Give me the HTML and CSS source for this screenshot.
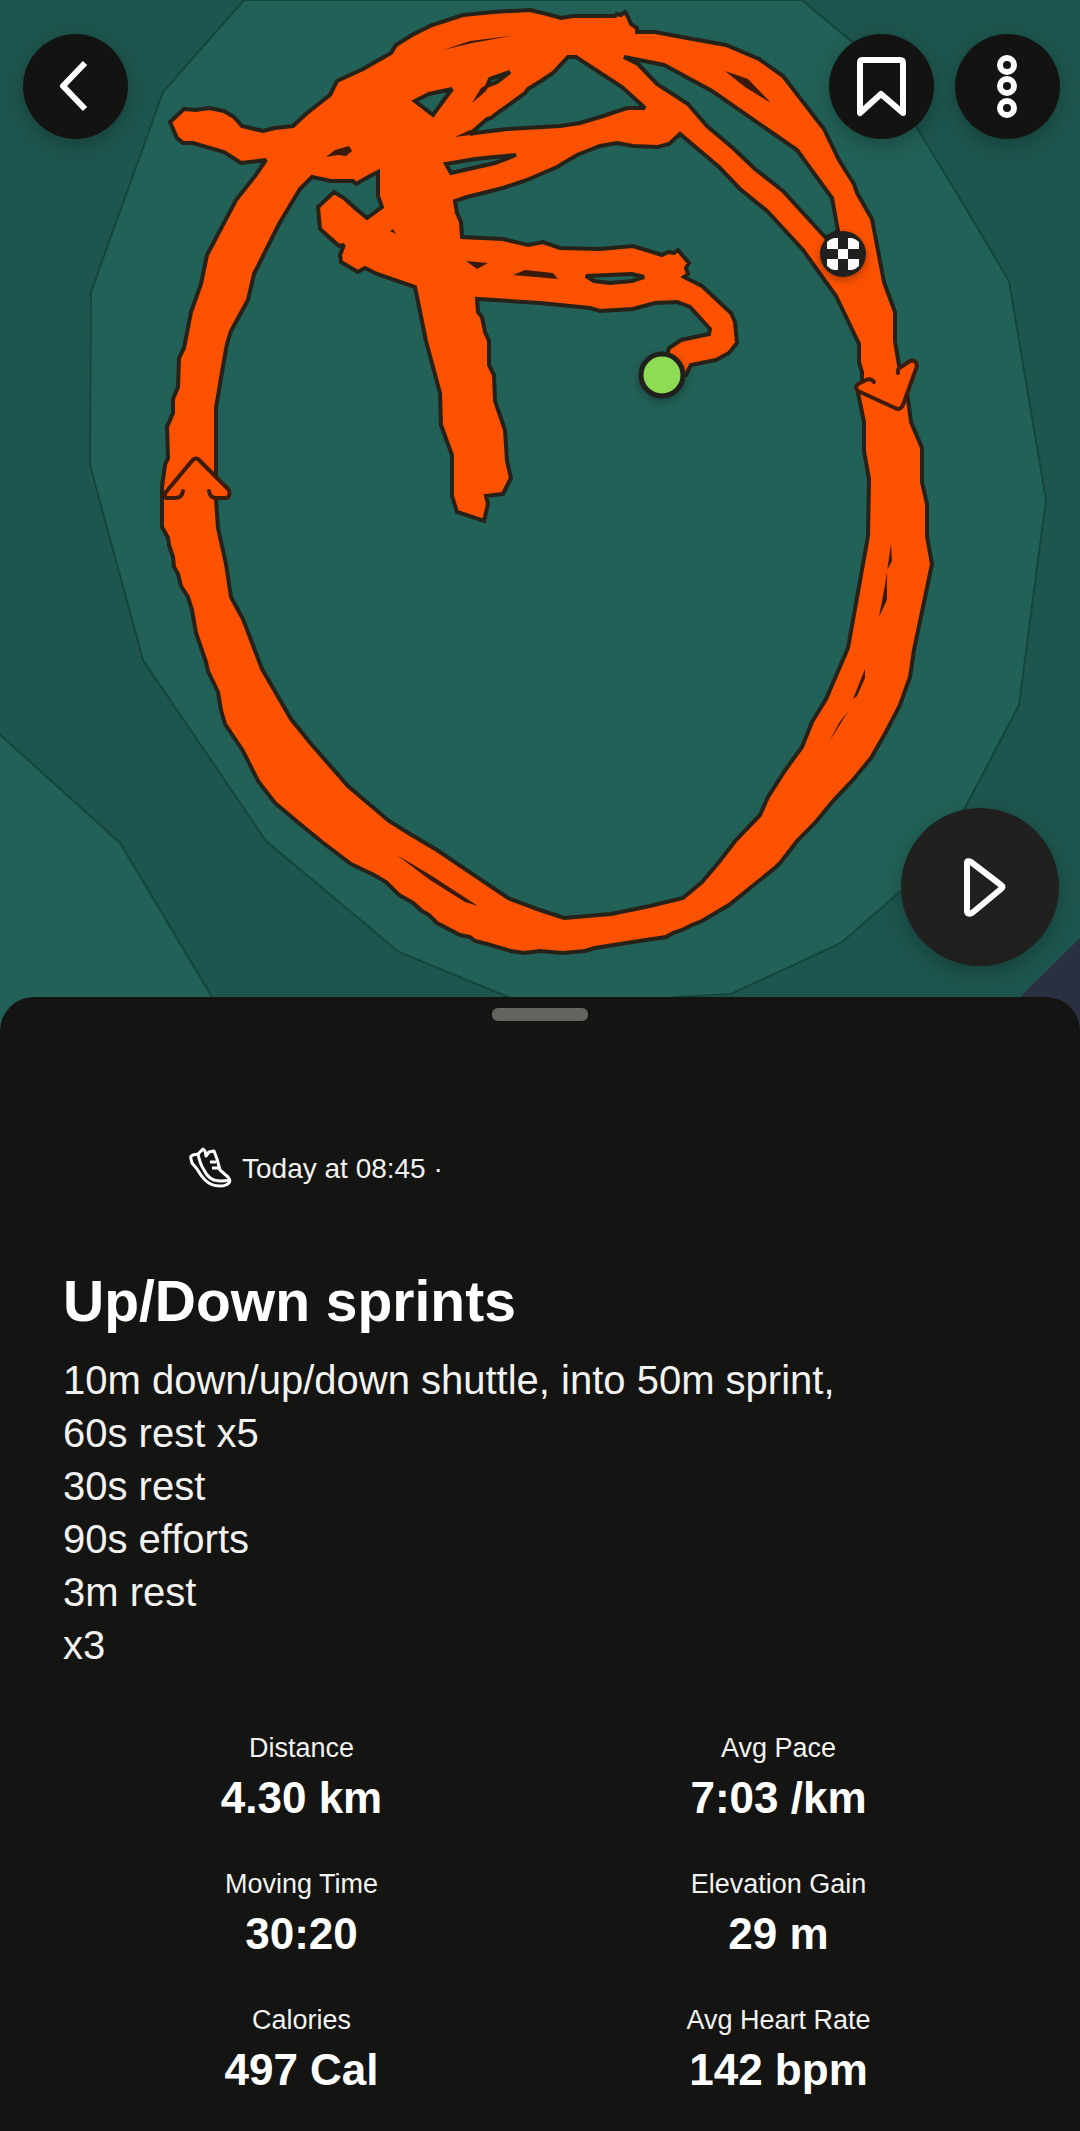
FILE: index.html
```
<!DOCTYPE html>
<html lang="en">
<head>
    <meta charset="UTF-8">
    <meta name="viewport" content="width=device-width, initial-scale=1.0">
    <title>Up/Down sprints</title>
    <link rel="stylesheet" href="styles.css">
</head>
<body>
    <section class="map">
        <svg class="map-canvas" viewBox="0 0 1080 1040" role="img" aria-label="Route map">
            <!-- Terrain -->
            <rect class="ground" width="1080" height="1040"/>
            <path class="field" d="M244 0 163 92 91 292 90 465 143 660 266 841 399 952 508 997 540 1010 679 997 731 994 841 943 901 891 965 808 1019 705 1046 500 1009 281 962 202 917 128 852 42 802 0Z"/>
            <path class="field" d="M-4 731 120 843 212 997 230 1044 -4 1044Z"/>
            <path class="road" d="M1080 938 1020 997 980 1040H1080Z"/>

            <!-- Route -->
            <path class="route" d="M170 122 184 109 196 110 209 108 224 111 234 117 242 126 263 131 275 128 293 126 307 113 330 95 337 81 363 69 391 53 396 45 412 35 432 25 463 15 493 12 530 10 547 14 561 18 573 16 615 16 617 14 621 15 625 12 628 17 631 24 637 28 637 32 655 32 687 38 726 45 759 59 783 76 824 129 839 160 854 184 857 193 872 219 884 282 895 312 895 341 899 365 908 399 911 422 922 448 922 482 927 504 927 536 932 564 914 650 910 677 900 705 886 732 871 758 853 780 833 801 815 823 797 841 781 862 776 867 729 905 702 921 692 925 682 930 673 933 666 937 626 943 595 948 585 951 563 953 540 951 524 953 511 951 487 944 475 941 470 937 460 935 437 923 429 915 422 911 413 903 399 895 386 882 374 875 351 864 322 842 300 824 275 803 258 781 243 751 225 724 221 710 218 692 208 671 206 662 196 633 192 610 188 597 181 586 178 574 174 567 173 557 169 545 168 538 162 527 162 487 165 465 168 458 167 427 173 413 173 399 178 387 179 358 184 348 191 312 201 284 207 255 236 200 255 176 266 160 241 163 224 152 193 143 183 143 177 138Z
                M312 177 331 181 353 181 356 184 370 176 378 172 378 196 382 207 367 218 355 208 344 198 334 192 318 207 320 229 339 246 344 245 340 255 341 262 358 272 365 268 377 274 415 287 426 341 440 393 441 425 452 455 452 496 457 512 484 521 488 504 486 496 503 494 511 478 507 461 505 430 495 401 494 375 489 365 489 341 485 332 482 317 478 312 477 299 540 303 590 308 600 311 633 309 655 303 677 302 690 307 710 329 709 334 681 340 669 348 661 375 686 375 691 365 716 360 729 353 737 343 735 322 731 313 702 286 684 277 688 274 686 268 689 263 683 256 678 250 674 253 668 252 662 255 633 246 600 249 560 248 543 242 528 245 503 239 462 237 461 222 457 213 455 201 467 197 503 188 527 180 557 167 577 155 600 146 617 143 633 146 658 147 669 144 680 134 719 167 740 189 767 211 803 250 836 296 859 344 859 362 862 372 862 382 858 393 864 422 864 451 869 479 868 536 848 648 826 699 812 722 802 747 786 769 768 797 760 815 736 840 719 862 702 882 683 898 650 906 611 914 564 918 540 910 508 898 437 850 410 834 389 821 348 786 312 745 291 719 262 669 243 619 231 597 226 564 218 528 216 499 216 408 222 372 227 344 231 331 248 300 254 274 279 224 300 189Z
                M624 57 664 65 712 91 797 150 832 198 838 231 826 238 783 191 755 169 733 148 707 126 688 104 657 84 638 64Z
                M470 134 487 119 491 118 500 111 506 107 525 93 528 89 541 81 553 73 568 57 576 57 622 87 645 108 627 108 600 117 580 123 560 126 507 129 475 133Z
                M415 101 429 94 452 89 433 115Z
                M446 164 475 159 516 155 495 163 451 173Z
                M490 79 510 72 497 82 487 86Z
                M586 276 632 274 644 277 632 281 610 283 594 281Z"/>
            <path class="gap" d="M443 50 470 41 517 35 472 43Z M472 103 481 88 491 82 486 91Z M455 137 470 130 478 134Z M326 157 335 150 349 146 352 151 346 156 338 155Z M390 231 393 229 396 234Z M466 261 488 263 477 269Z M513 275 525 270 553 273 558 279Z M725 71 748 79 771 103 745 87Z M891 544 892 561 887 570 887 600 879 617 885 585Z M865 669 865 678 857 696 853 699Z M849 710 829 742 839 723Z M397 855 432 876 478 906 465 902 430 880Z"/>

            <!-- Direction arrows -->
            <path class="arrow" d="M183 491Q182 498 175 498H166Q163 495 166 492L191 462Q196 455 201 462L229 490Q231 498 225 498H216Q210 498 209 491"/>
            <path class="arrow" d="M874 382Q871 378 866 380L858 384Q854 388 858 391L895 408Q900 411 903 405L917 366Q916 359 910 361L901 367Q897 369 898 373"/>

            <!-- Start and finish -->
            <g class="marker">
                <circle cx="662" cy="375" r="21" fill="#8edb54" stroke="#20201c" stroke-width="5"/>
            </g>
            <g class="marker">
                <circle cx="843" cy="254" r="23" fill="#20201e"/>
                <path fill="#fafafa" d="M827 249V242Q830 239 834 238H838V249ZM848 238H852Q856 239 859 242V249H848ZM838 249H848V259H838ZM827 259H838V270H834Q830 269 827 266ZM848 259H859V266Q856 269 852 270H848Z"/>
            </g>
        </svg>

        <nav class="toolbar">
            <button class="round-btn" type="button" aria-label="Back">
                <svg viewBox="0 0 105 105"><path d="M62 29 40 52 62 75"/></svg>
            </button>
            <div class="toolbar-right">
                <button class="round-btn" type="button" aria-label="Save">
                    <svg viewBox="0 0 105 105"><path d="M33 26H71Q74 26 74 29V79L52 60 31 79V29Q31 26 33 26Z"/></svg>
                </button>
                <button class="round-btn" type="button" aria-label="More options">
                    <svg viewBox="0 0 105 105"><circle cx="52" cy="31" r="7"/><circle cx="52" cy="52" r="7"/><circle cx="52" cy="74" r="7"/></svg>
                </button>
            </div>
        </nav>

        <button class="play-btn" type="button" aria-label="Play route">
            <svg viewBox="0 0 158 158"><path d="M66 55Q66 52 70 54L100 77Q103 79 100 81L71 105Q66 107 66 103Z"/></svg>
        </button>
    </section>

    <main class="sheet">
        <div class="handle"></div>

        <div class="meta">
            <svg class="shoe" viewBox="8 10 44 44">
                <path d="M11 22Q10 19 13 18L18 17 23 12 25 14 26 19 29 15 34 14 37 22 40 33 48 40Q51 43 49 46 46 49 40 49 31 49 25 43 21 39 17 32L12 26Z"/>
                <path d="M18 17Q20 27 24 33 28 41 34 43 41 45 49 43"/>
                <path d="M30 25H36M32 31H39"/>
            </svg>
            <span>Today at 08:45 ·</span>
        </div>

        <h1>Up/Down sprints</h1>
        <p class="description">10m down/up/down shuttle, into 50m sprint,<br>60s rest x5<br>30s rest<br>90s efforts<br>3m rest<br>x3</p>

        <dl class="stats">
            <div class="stat">
                <dt>Distance</dt>
                <dd>4.30 km</dd>
            </div>
            <div class="stat">
                <dt>Avg Pace</dt>
                <dd>7:03 /km</dd>
            </div>
            <div class="stat">
                <dt>Moving Time</dt>
                <dd>30:20</dd>
            </div>
            <div class="stat">
                <dt>Elevation Gain</dt>
                <dd>29 m</dd>
            </div>
            <div class="stat">
                <dt>Calories</dt>
                <dd>497 Cal</dd>
            </div>
            <div class="stat">
                <dt>Avg Heart Rate</dt>
                <dd>142 bpm</dd>
            </div>
        </dl>
    </main>
</body>
</html>
```
FILE: styles.css
```
* {
    box-sizing: border-box;
}

body {
    margin: 0;
    background-color: #141412;
    color: #f2f2f0;
    font-family: 'Liberation Sans', Arial, sans-serif;
}

/* Map */
.map {
    position: relative;
}

.map-canvas {
    display: block;
    width: 100%;
}

.ground {
    fill: #1d564e;
}

.field {
    fill: #226157;
    stroke: #15463e;
    stroke-width: 2;
}

.road {
    fill: #2b3040;
}

.route {
    fill: #fc5200;
    fill-rule: evenodd;
    stroke: #26221a;
    stroke-width: 4;
    stroke-miterlimit: 2;
}

.gap {
    fill: #3a1a0c;
}

.arrow {
    fill: #fc5200;
    stroke: #3d1c0d;
    stroke-width: 4;
    stroke-linecap: round;
    stroke-linejoin: round;
}

.marker {
    filter: drop-shadow(0 3px 4px rgba(0, 0, 0, 0.3));
}

.toolbar {
    position: absolute;
    top: 34px;
    left: 23px;
    right: 20px;
    display: flex;
    justify-content: space-between;
}

.toolbar-right {
    display: flex;
    gap: 21px;
}

button {
    padding: 0;
    border: none;
    border-radius: 50%;
    cursor: pointer;
    box-shadow: 0 6px 20px rgba(0, 0, 0, 0.25);
}

button svg {
    display: block;
    fill: none;
    stroke: #fff;
    stroke-width: 6;
    stroke-linejoin: round;
}

.round-btn {
    width: 105px;
    height: 105px;
    background-color: #131412;
}

.play-btn {
    position: absolute;
    right: 21px;
    bottom: 74px;
    width: 158px;
    height: 158px;
    background-color: #20201e;
}

/* Activity details */
.sheet {
    position: relative;
    margin-top: -43px;
    padding: 11px 63px 34px;
    background-color: #141412;
    border-radius: 34px 34px 0 0;
}

.handle {
    width: 96px;
    height: 13px;
    margin: 0 auto 126px;
    border-radius: 6px;
    background-color: #64635f;
}

.meta {
    display: flex;
    align-items: center;
    gap: 10px;
    margin: 0 0 78px 125px;
    font-size: 28px;
    line-height: 36px;
}

.shoe {
    width: 44px;
    height: 44px;
    fill: none;
    stroke: #fff;
    stroke-width: 3;
    stroke-linejoin: round;
}

h1 {
    margin: 0 0 21px;
    color: #fff;
    font-size: 57px;
    line-height: 64px;
}

.description {
    margin: 0 0 58px;
    font-size: 40px;
    line-height: 53px;
}

.stats {
    display: grid;
    grid-template-columns: 1fr 1fr;
    row-gap: 42px;
    margin: 0;
    text-align: center;
}

.stat dt {
    margin-bottom: 6px;
    font-size: 27px;
    line-height: 36px;
}

.stat dd {
    margin: 0;
    color: #fff;
    font-size: 44px;
    font-weight: bold;
    line-height: 52px;
}
```
